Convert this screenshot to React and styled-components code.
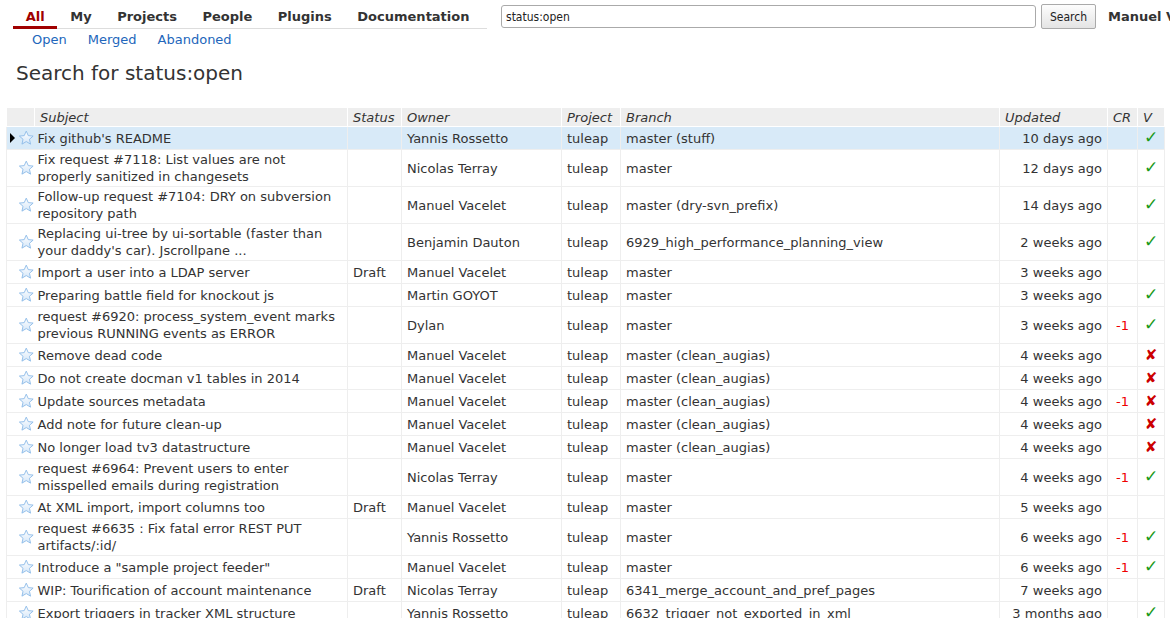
import React from "react";
import styled, { createGlobalStyle } from "styled-components";

const GlobalStyle = createGlobalStyle`
  body {
    margin: 0;
    background: #fff;
    font-family: "DejaVu Sans", Verdana, sans-serif;
    font-size: 13px;
    color: #333;
  }
`;

const Page = styled.div`
  width: 1170px;
  overflow: hidden;
`;

const TopBar = styled.div`
  display: flex;
  align-items: flex-start;
  white-space: nowrap;
`;

const Menu = styled.div`
  flex: none;
  margin-left: 13px;
  width: 474px;
`;

const Tabs = styled.div`
  display: flex;
  border-bottom: 1px solid #ddd;
`;

const Tab = styled.a`
  padding: 9px 12.75px 1px;
  line-height: 16px;
  font-weight: bold;
  color: ${(p) => (p.$active ? "#a00000" : "#333")};
  border-bottom: 3px solid ${(p) => (p.$active ? "#a00000" : "transparent")};
  margin-bottom: -1px;
  cursor: pointer;
`;

const SubMenu = styled.div`
  display: flex;
  gap: 21px;
  padding: 3px 0 0 19px;
  line-height: 16px;
`;

const SubLink = styled.a`
  color: #2266bb;
  cursor: pointer;
`;

const SearchForm = styled.form`
  flex: none;
  display: flex;
  align-items: center;
  margin: 4px 0 0 14px;
`;

const SearchInput = styled.input`
  width: 535px;
  height: 23px;
  box-sizing: border-box;
  border: 1px solid #aaa;
  border-radius: 3px;
  padding: 0 4px;
  font-family: "DejaVu Sans Condensed", "Liberation Sans Narrow", "Liberation Sans", sans-serif;
  font-size: 12px;
  color: #222;
`;

const SearchButton = styled.button`
  margin-left: 5px;
  width: 55px;
  height: 25px;
  border: 1px solid #aaa;
  border-radius: 2px;
  background: linear-gradient(#fdfdfd, #e4e4e4);
  font-family: "DejaVu Sans Condensed", "Liberation Sans Narrow", "Liberation Sans", sans-serif;
  font-size: 12px;
  color: #222;
  padding: 0;
`;

const UserName = styled.span`
  margin-left: 12px;
  font-weight: bold;
  line-height: 24px;
`;

const Heading = styled.h1`
  margin: 13px 0 22px 16px;
  font-size: 20px;
  line-height: 24px;
  font-weight: normal;
  color: #333;
`;

const Table = styled.table`
  margin-left: 6px;
  width: 1158px;
  table-layout: fixed;
  border-collapse: collapse;
`;

const Th = styled.th`
  background: #eee;
  border: 1px solid #fff;
  padding: 2px 5px 0;
  line-height: 16px;
  font-weight: normal;
  font-style: italic;
  text-align: left;
  color: #333;
  white-space: nowrap;
  overflow: hidden;
`;

const Tr = styled.tr`
  background: ${(p) => (p.$selected ? "#d8eaf8" : "#fff")};
`;

const Td = styled.td`
  border: 1px solid #eee;
  padding: 1px 5px;
  line-height: 17px;
  vertical-align: middle;
  text-align: ${(p) => p.$align || "left"};
  white-space: ${(p) => (p.$wrap ? "normal" : "nowrap")};
  overflow: hidden;
`;

const IconCell = styled.td`
  border: 1px solid #eee;
  border-right: none;
  padding: 1px 0 1px 3px;
  height: 20px;
  vertical-align: middle;
`;

const SubjectCell = styled(Td)`
  border-left: none;
  padding-left: 3px;
`;

const IconBox = styled.div`
  display: flex;
  align-items: center;
  gap: 2px;
`;

const Pointer = styled.span`
  width: 0;
  height: 0;
  border-top: 5px solid transparent;
  border-bottom: 5px solid transparent;
  border-left: 5px solid ${(p) => (p.$show ? "#000" : "transparent")};
  margin-right: 1px;
`;

const Score = styled.span`
  color: #e00;
`;

const Verified = styled.span`
  display: inline-block;
  line-height: 17px;
  color: ${(p) => (p.$ok ? "#1a9a1a" : "#cc0000")};
  font-size: ${(p) => (p.$ok ? "17px" : "15px")};
  font-weight: ${(p) => (p.$ok ? "normal" : "bold")};
`;

const Star = () => (
  <svg width="18" height="18" viewBox="0 0 18 18">
    <defs>
      <linearGradient id="sg" x1="0" y1="0" x2="0" y2="1">
        <stop offset="0" stopColor="#ffffff" />
        <stop offset="1" stopColor="#d4e6f8" />
      </linearGradient>
    </defs>
    <path
      d="M9 1.5 L11.2 6.4 L16.5 6.9 L12.5 10.4 L13.7 15.7 L9 12.9 L4.3 15.7 L5.5 10.4 L1.5 6.9 L6.8 6.4 Z"
      fill="url(#sg)"
      stroke="#8dbbe8"
      strokeWidth="1"
      strokeLinejoin="round"
    />
  </svg>
);

const rows = [
  ["Fix github's README", "", "Yannis Rossetto", "master (stuff)", "10 days ago", "", "ok"],
  ["Fix request #7118: List values are not properly sanitized in changesets", "", "Nicolas Terray", "master", "12 days ago", "", "ok"],
  ["Follow-up request #7104: DRY on subversion repository path", "", "Manuel Vacelet", "master (dry-svn_prefix)", "14 days ago", "", "ok"],
  ["Replacing ui-tree by ui-sortable (faster than your daddy's car). Jscrollpane ...", "", "Benjamin Dauton", "6929_high_performance_planning_view", "2 weeks ago", "", "ok"],
  ["Import a user into a LDAP server", "Draft", "Manuel Vacelet", "master", "3 weeks ago", "", ""],
  ["Preparing battle field for knockout js", "", "Martin GOYOT", "master", "3 weeks ago", "", "ok"],
  ["request #6920: process_system_event marks previous RUNNING events as ERROR", "", "Dylan", "master", "3 weeks ago", "-1", "ok"],
  ["Remove dead code", "", "Manuel Vacelet", "master (clean_augias)", "4 weeks ago", "", "ko"],
  ["Do not create docman v1 tables in 2014", "", "Manuel Vacelet", "master (clean_augias)", "4 weeks ago", "", "ko"],
  ["Update sources metadata", "", "Manuel Vacelet", "master (clean_augias)", "4 weeks ago", "-1", "ko"],
  ["Add note for future clean-up", "", "Manuel Vacelet", "master (clean_augias)", "4 weeks ago", "", "ko"],
  ["No longer load tv3 datastructure", "", "Manuel Vacelet", "master (clean_augias)", "4 weeks ago", "", "ko"],
  ["request #6964: Prevent users to enter misspelled emails during registration", "", "Nicolas Terray", "master", "4 weeks ago", "-1", "ok"],
  ["At XML import, import columns too", "Draft", "Manuel Vacelet", "master", "5 weeks ago", "", ""],
  ["request #6635 : Fix fatal error REST PUT artifacts/:id/", "", "Yannis Rossetto", "master", "6 weeks ago", "-1", "ok"],
  ["Introduce a \"sample project feeder\"", "", "Manuel Vacelet", "master", "6 weeks ago", "-1", "ok"],
  ["WIP: Tourification of account maintenance", "Draft", "Nicolas Terray", "6341_merge_account_and_pref_pages", "7 weeks ago", "", ""],
  ["Export triggers in tracker XML structure", "", "Yannis Rossetto", "6632_trigger_not_exported_in_xml", "3 months ago", "", "ok"],
];

const widths = [28, 313, 54, 160, 59, 379, 108, 30, 27];

const App = () => {
  return (
    <Page>
      <GlobalStyle />
      <TopBar>
        <Menu>
          <Tabs>
            <Tab $active>All</Tab>
            <Tab>My</Tab>
            <Tab>Projects</Tab>
            <Tab>People</Tab>
            <Tab>Plugins</Tab>
            <Tab>Documentation</Tab>
          </Tabs>
          <SubMenu>
            <SubLink>Open</SubLink>
            <SubLink>Merged</SubLink>
            <SubLink>Abandoned</SubLink>
          </SubMenu>
        </Menu>
        <SearchForm onSubmit={(e) => e.preventDefault()}>
          <SearchInput defaultValue="status:open" />
          <SearchButton type="submit">Search</SearchButton>
          <UserName>Manuel Vacelet</UserName>
        </SearchForm>
      </TopBar>

      <Heading>Search for status:open</Heading>

      <Table>
        <colgroup>
          {widths.map((w, i) => (
            <col key={i} style={{ width: w }} />
          ))}
        </colgroup>
        <thead>
          <tr>
            <Th />
            <Th>Subject</Th>
            <Th>Status</Th>
            <Th>Owner</Th>
            <Th>Project</Th>
            <Th>Branch</Th>
            <Th>Updated</Th>
            <Th>CR</Th>
            <Th>V</Th>
          </tr>
        </thead>
        <tbody>
          {rows.map((r, i) => (
            <Tr key={i} $selected={i === 0}>
              <IconCell>
                <IconBox>
                  <Pointer $show={i === 0} />
                  <Star />
                </IconBox>
              </IconCell>
              <SubjectCell $wrap>{r[0]}</SubjectCell>
              <Td>{r[1]}</Td>
              <Td>{r[2]}</Td>
              <Td>tuleap</Td>
              <Td>{r[3]}</Td>
              <Td $align="right">{r[4]}</Td>
              <Td $align="center">{r[5] && <Score>{r[5]}</Score>}</Td>
              <Td $align="center">
                {r[6] === "ok" && <Verified $ok>✓</Verified>}
                {r[6] === "ko" && <Verified>✘</Verified>}
              </Td>
            </Tr>
          ))}
        </tbody>
      </Table>
    </Page>
  );
};

export default App;
